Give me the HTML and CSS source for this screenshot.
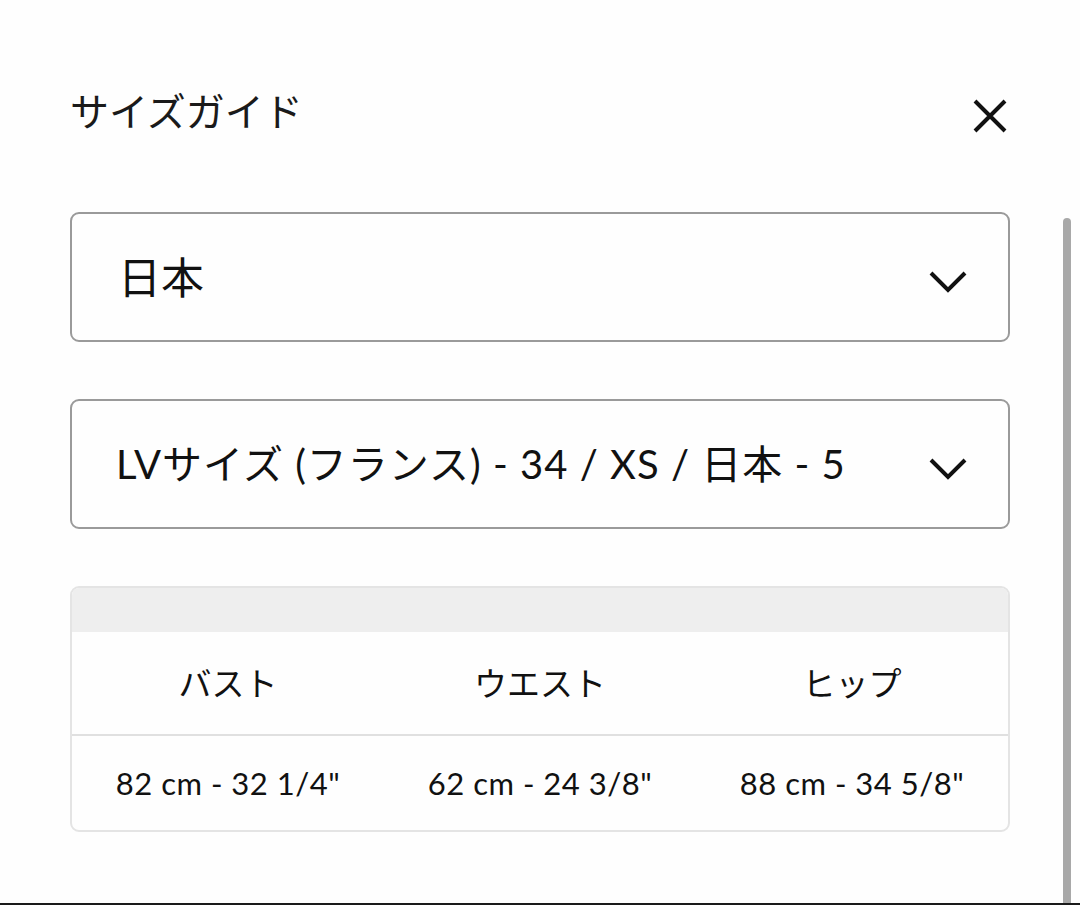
FILE: index.html
```html
<!DOCTYPE html>
<html lang="ja">
<head>
<meta charset="utf-8">
<title>サイズガイド</title>
<link rel="stylesheet" href="styles.css">
</head>
<body>
<div class="page">
  <div class="sheet">
    <header class="head">
      <h1 class="title">サイズガイド</h1>
      <button class="close" aria-label="閉じる">
        <svg width="34" height="34" viewBox="0 0 34 34"><path d="M2 2 L32 32 M32 2 L2 32" stroke="#111" stroke-width="4" fill="none"/></svg>
      </button>
    </header>

    <div class="select">
      <span class="select-text">日本</span>
      <svg class="chev" width="38" height="22" viewBox="0 0 38 22"><path d="M2 2 L19 19 L36 2" stroke="#111" stroke-width="4" fill="none"/></svg>
    </div>

    <div class="select">
      <span class="select-text lv">LVサイズ (フランス) - 34 / XS / 日本 - 5</span>
      <svg class="chev" width="38" height="22" viewBox="0 0 38 22"><path d="M2 2 L19 19 L36 2" stroke="#111" stroke-width="4" fill="none"/></svg>
    </div>

    <div class="table">
      <div class="table-top"></div>
      <div class="row head-row">
        <div class="cell">バスト</div>
        <div class="cell">ウエスト</div>
        <div class="cell">ヒップ</div>
      </div>
      <div class="row data-row">
        <div class="cell">82 cm - 32 1/4"</div>
        <div class="cell">62 cm - 24 3/8"</div>
        <div class="cell">88 cm - 34 5/8"</div>
      </div>
    </div>
  </div>
  <div class="scrollbar"></div>
</div>
</body>
</html>
```

FILE: styles.css
```css
html, body {
  margin: 0;
  padding: 0;
  background: #fefefe;
}

body {
  font-family: "Lato", "Noto Sans CJK JP", sans-serif;
  color: #111;
}

.page {
  position: relative;
  height: 905px;
  box-sizing: border-box;
  border-bottom: 2px solid #1a1a1a;
  overflow: hidden;
}

.sheet {
  padding: 0 70px;
  display: flex;
  flex-direction: column;
}

.head {
  display: flex;
  align-items: flex-start;
  justify-content: space-between;
  height: 212px;
  box-sizing: border-box;
  padding-top: 90px;
}

.title {
  margin: 0;
  font-family: "Noto Sans CJK JP", sans-serif;
  font-size: 39px;
  font-weight: 400;
  line-height: 39px;
  color: #1a1a1a;
}

.close {
  border: 0;
  background: none;
  padding: 0;
  margin: 9px 3px 0 0;
  display: flex;
}

.select {
  height: 130px;
  box-sizing: border-box;
  border: 2px solid #9a9a9a;
  border-radius: 9px;
  display: flex;
  align-items: center;
  justify-content: space-between;
  padding: 0 41px 0 46px;
  margin-bottom: 57px;
}

.select-text {
  font-size: 43px;
  line-height: 1;
}

.select-text.lv {
  font-size: 40px;
  letter-spacing: 1px;
  margin-left: -2px;
}

.chev {
  display: block;
  margin-top: 10px;
}

.table {
  border: 2px solid #e4e4e4;
  border-radius: 9px;
  overflow: hidden;
  height: 246px;
  box-sizing: border-box;
  display: flex;
  flex-direction: column;
}

.table-top {
  height: 44px;
  background: #eeeeee;
}

.row {
  display: grid;
  grid-template-columns: 1fr 1fr 1fr;
  align-items: center;
}

.head-row {
  height: 102px;
  border-bottom: 2px solid #e0e0e0;
  font-size: 33px;
}

.data-row {
  flex: 1;
  font-size: 31px;
  letter-spacing: 0.5px;
}

.cell {
  text-align: center;
  line-height: 1;
}

.scrollbar {
  position: absolute;
  right: 9px;
  top: 218px;
  bottom: 0;
  width: 8px;
  background: #a8a8a8;
  border-radius: 4px 4px 0 0;
}
```
